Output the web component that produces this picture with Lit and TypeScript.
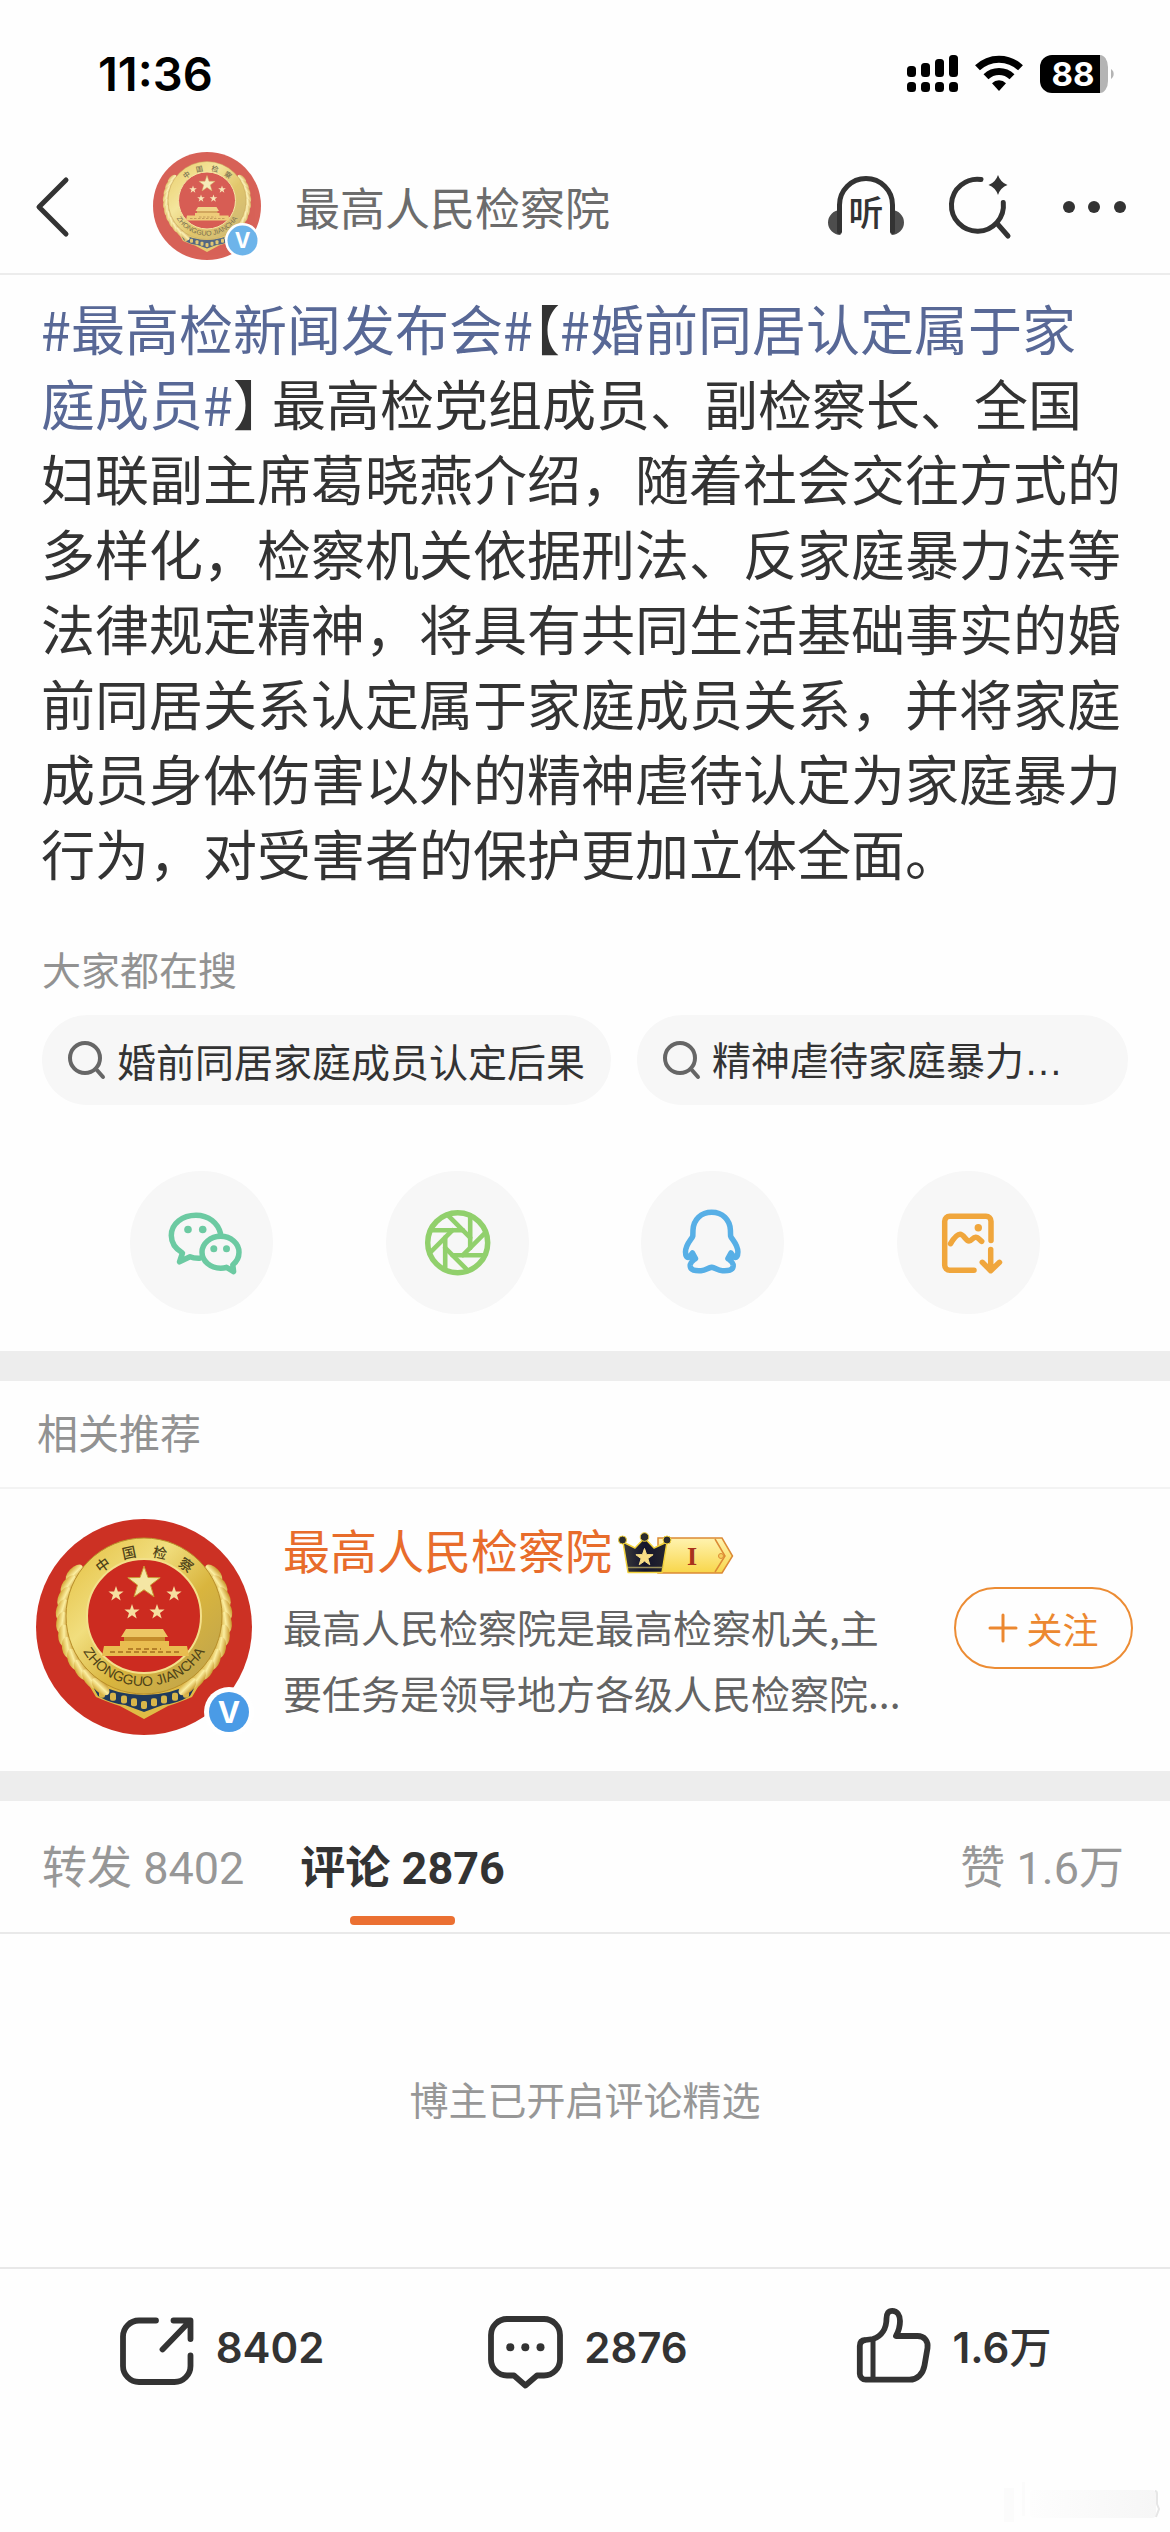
import { LitElement, html, svg, css } from "lit";
import { customElement, property, state } from "lit/decorators.js";
import { classMap } from "lit/directives/class-map.js";

const star = (cx: number, cy: number, r: number) => {
  const pts: string[] = [];
  for (let i = 0; i < 10; i++) {
    const rad = i % 2 ? r * 0.4 : r;
    const a = (-90 + i * 36) * (Math.PI / 180);
    pts.push(`${(cx + rad * Math.cos(a)).toFixed(1)},${(cy + rad * Math.sin(a)).toFixed(1)}`);
  }
  return pts.join(" ");
};

/* Wheat ears running down both flanks of the emblem ring. */
const leaves = Array.from({ length: 11 }, (_, i) => {
  const deg = 212 - i * 9;
  const a = (deg * Math.PI) / 180;
  return { x: 108 + 82 * Math.cos(a), y: 98 + 82 * Math.sin(a), rot: deg - 90 + 22 };
});

@customElement("org-avatar")
export class OrgAvatar extends LitElement {
  static styles = css`
    :host { display: block; flex: none; }
    .art { display: block; width: 100%; height: auto; }
    .cn { font: 500 14px "Noto Sans CJK SC", sans-serif; fill: #4f4318; text-anchor: middle; }
    .py { font: 14px "Liberation Sans", sans-serif; fill: #4f4318; text-anchor: middle; }
    .v { font: 700 30px Inter, sans-serif; fill: #fff; text-anchor: middle; }
    .v-large { font-size: 42px; }
    .faded { opacity: 0.76; }
  `;
  @property({ type: Boolean }) faded = false;
  @property({ type: Number }) badge = 20;

  render() {
    const b = this.badge;
    const bx = this.faded ? 179 : 193;
    const by = this.faded ? 177 : 193;
    return html`<svg class="art" viewBox="0 0 218 218" role="img" aria-label="最高人民检察院头像">
      <defs>
        <linearGradient id="gold" x1="0" y1="0" x2="1" y2="1">
          <stop offset="0" stop-color="#e3bd3c" />
          <stop offset="0.35" stop-color="#f1de7e" />
          <stop offset="0.6" stop-color="#d9b53e" />
          <stop offset="1" stop-color="#b9a050" />
        </linearGradient>
        <linearGradient id="leaf" x1="0" y1="0" x2="1" y2="0">
          <stop offset="0" stop-color="#c8962a" />
          <stop offset="0.5" stop-color="#fbeea0" />
          <stop offset="1" stop-color="#d3a836" />
        </linearGradient>
        <path id="arc" d="M38 108A71 71 0 0 0 178 108" />
      </defs>
      <g class=${classMap({ faded: this.faded })}>
        <circle cx="108" cy="108" r="108" fill="#cc3124" />
        <path d="M48 158L60 178Q74 184 84 187L108 200L132 187Q142 184 156 178L168 158Z" fill="#e0bb45" />
        <path d="M54 162Q108 190 162 162L154 177Q140 185 127 186L108 193L89 186Q76 185 62 177Z" fill="#1f3a5c" />
        ${[66, 77, 88, 98, 108, 118, 128, 139, 150].map(
          (x) => svg`<rect x=${x - 3} y=${182 - Math.abs(x - 108) * 0.27} width="6" height="8" rx="2" fill="#d8b64a" />`
        )}
        ${leaves.map(
          (l) => svg`<ellipse cx=${l.x} cy=${l.y} rx="6" ry="11" fill="url(#leaf)" transform="rotate(${l.rot + 80} ${l.x} ${l.y})" />
            <ellipse cx=${216 - l.x} cy=${l.y} rx="6" ry="11" fill="url(#leaf)" transform="rotate(${-l.rot - 80} ${216 - l.x} ${l.y})" />`
        )}
        <circle cx="108" cy="97" r="78" fill="url(#gold)" stroke="#b98f2a" stroke-width="1" />
        <circle cx="108" cy="97" r="57" fill="#cc2b20" stroke="#f3e08a" stroke-width="2" />
        <polygon points=${star(108, 64, 17)} fill="#f4e6a4" stroke="#c99a34" stroke-width="1" />
        <polygon points=${star(80, 75, 8)} fill="#f6dfa0" />
        <polygon points=${star(138, 75, 8)} fill="#f6dfa0" />
        <polygon points=${star(96, 93, 8)} fill="#f6dfa0" />
        <polygon points=${star(121, 93, 8)} fill="#f6dfa0" />
        <path d="M90 110H127L132 118H85Z" fill="#edc765" />
        <rect x="88" y="118" width="41" height="4" fill="#c58d2c" />
        <path d="M84 122H133V127H151L153 137H66L68 127H84Z" fill="#e9bd50" />
        <path d="M74 133H143M92 130H125" stroke="#b5802a" stroke-width="2" stroke-dasharray="5 3" />
        <text class="cn" x="67" y="51" transform="rotate(-36 67 46)">中</text>
        <text class="cn" x="93" y="39" transform="rotate(-12 93 34)">国</text>
        <text class="cn" x="124" y="39" transform="rotate(12 124 34)">检</text>
        <text class="cn" x="150" y="51" transform="rotate(36 150 46)">察</text>
        <text class="py"><textPath href="#arc" startOffset="50%">ZHONGGUO JIANCHA</textPath></text>
      </g>
      <circle cx=${bx} cy=${by} r=${b + 5} fill="#fff" />
      <circle cx=${bx} cy=${by} r=${b} fill=${this.faded ? "#6db4ea" : "#4a9be6"} />
      <text class=${classMap({ v: true, "v-large": this.faded })} x=${bx} y=${by + (this.faded ? 15 : 11)}>V</text>
    </svg>`;
  }
}

const searchIcon = svg`<circle cx="17" cy="17" r="15" /><path d="M28 28L35 36" />`;

const shareIcons = [
  {
    name: "微信",
    color: "#6ccaa2",
    art: svg`<path d="M69.5 87.3C66 87.4 62.5 87 60 85.8L49.5 90.8L52.5 82C45 77.5 41.3 71 41.3 64.5C41.3 52.5 52.5 44.2 66 44.2C78.5 44.2 88 52 90.5 62.5" />
      <path d="M96.5 96.3L103.6 100.6L102.8 93.8C107 90.5 109 86 109 81.3C109 72.5 101 65.3 90.7 65.3C80.4 65.3 72 72.5 72 81.3C72 90 80.4 97.2 90.7 97.2C92.8 97.2 94.7 96.9 96.5 96.3Z" />
      <g fill="currentColor" stroke="none"><circle cx="58" cy="58.5" r="3.8" /><circle cx="72.7" cy="58.5" r="3.8" /><circle cx="83.8" cy="77.8" r="3.5" /><circle cx="96.5" cy="77.8" r="3.5" /></g>`,
  },
  {
    name: "朋友圈",
    color: "#91d06c",
    art: svg`<circle cx="71.7" cy="71.7" r="30" />
      ${[0, 45, 90, 135, 180, 225, 270, 315].map(
        (a) => svg`<path stroke-width="4.6" d="M12.5 5.2V-27.3" transform="translate(71.7 71.7) rotate(${a})" />`
      )}`,
  },
  {
    name: "QQ",
    color: "#57afe6",
    art: svg`<path d="M70.7 41.3C60 41.3 52.5 48.5 52 59L51.8 65C51 68 44.5 73 44.5 81C44.5 85 46 87.5 48.5 86L51.5 82L54.5 87.5C52 89.5 49 91 49.2 95C49.5 99 55 100 60 99.7C65 99.4 67 96.8 70.7 96.3C74.4 96.8 76.4 99.4 81.4 99.7C86.4 100 91.9 99 92.2 95C92.4 91 89.4 89.5 86.9 87.5L89.9 82L92.9 86C95.4 87.5 96.9 85 96.9 81C96.9 73 90.4 68 89.6 65L89.4 59C88.9 48.5 81.4 41.3 70.7 41.3Z" />
      <path fill="currentColor" stroke-width="3" d="M51.500 82L54.500 87.500L49.500 87ZM89.900 82L86.900 87.500L91.900 87Z" />`,
  },
  {
    name: "保存图片",
    color: "#f0a63c",
    art: svg`<path d="M94 69.5V50.3a5 5 0 0 0-5-5H52.7a5 5 0 0 0-5 5V94.3a5 5 0 0 0 5 5H77" />
      <path d="M53.5 72.7C57 67 60 63.3 63 63.3C67 63.3 68.5 70 72 70C75 70 75.5 66.3 78.7 66.3C81 66.3 82.5 68.5 84.7 70.4" />
      <circle cx="81.3" cy="56.7" r="3.7" fill="currentColor" stroke="none" />
      <path d="M93.7 78.5V99.5M85.3 91.3L93.7 99.7L102.5 91.3" />`,
  },
];

const actions = [
  {
    name: "转发",
    count: "8402",
    unit: "",
    art: svg`<path d="M36 12.5H19a16 16 0 0 0-16 16V58a16 16 0 0 0 16 16H54.5a16 16 0 0 0 16-16V47.5M53.5 12.5H70.5V31M42.5 41.5L70 13" />`,
  },
  {
    name: "评论",
    count: "2876",
    unit: "",
    art: svg`<path d="M19 11H56a16 16 0 0 1 16 16V51.500a16 16 0 0 1-16 16H49L37.400 77.500L26 67.500H19a16 16 0 0 1-16-16V27a16 16 0 0 1 16-16Z" />
      <g fill="currentColor" stroke="none"><circle cx="22.3" cy="39.3" r="4" /><circle cx="37.3" cy="39.3" r="4" /><circle cx="52.5" cy="39.3" r="4" /></g>`,
  },
  {
    name: "赞",
    count: "1.6",
    unit: "万",
    art: svg`<path d="M16 31C25 28 29.500 20 29.500 10.500C29.500 5.500 31.500 2.800 35.200 2.800C40 2.800 43 7 43 13C43 19 41.500 23.500 39 28H60.500C67.500 28 71.500 33.500 70.500 40L67.500 57.500C66 66 60 71.700 52.500 71.700H9A6 6 0 0 1 2.800 65.700V38C2.800 34 5 32.300 8.500 32Z" /><path stroke-width="5" d="M16 32V71" />`,
  },
];

@customElement("app-root")
export class AppRoot extends LitElement {
  static styles = css`
    :host {
      display: flex;
      flex-direction: column;
      min-height: 100vh;
      background: #fefefe;
      color: #333;
      font-family: "Noto Sans CJK SC", sans-serif;
      font-size: 39px;
    }
    button {
      font: inherit;
      color: inherit;
      background: none;
      border: 0;
      padding: 0;
      cursor: pointer;
    }
    a { color: inherit; text-decoration: none; }
    svg { display: block; flex: none; overflow: visible; }
    .line { fill: none; stroke: currentColor; stroke-linecap: round; stroke-linejoin: round; }

    .status {
      display: flex;
      align-items: center;
      justify-content: space-between;
      height: 140px;
      padding: 8px 54px 0 98px;
      box-sizing: border-box;
      color: #000;
    }
    .clock { font: 600 47px/56px Inter, sans-serif; }
    .status-icons { display: flex; gap: 17px; }
    .pct { font: 700 33px Inter, sans-serif; fill: #fff; text-anchor: middle; }

    .top {
      display: flex;
      align-items: center;
      height: 133px;
      padding: 0 43px 0 36px;
      border-bottom: 2px solid #ececec;
    }
    .who { display: flex; align-items: center; gap: 33px; margin-left: 84px; flex: 1; }
    .who-pic { width: 109px; }
    .who-name { font-size: 45px; line-height: 60px; color: #6c6c6c; font-weight: 400; margin: 0; }
    .tools { display: flex; align-items: center; gap: 43px; }
    .ting { font: 500 35px "Noto Sans CJK SC", sans-serif; fill: currentColor; text-anchor: middle; }

    .post { padding: 15px 45px 0 41px; font-size: 54px; line-height: 75px; margin: 0; }
    .topic { color: #586896; }
    .half { font-feature-settings: "halt"; }

    .label { margin: 0; font-weight: 400; color: #929292; }
    .hot { padding: 50px 42px 0; }
    .hot .label { font-size: 39px; line-height: 56px; }
    .pills { display: flex; gap: 26px; margin-top: 19px; }
    .pill {
      display: flex;
      align-items: center;
      gap: 12px;
      height: 90px;
      padding: 0 26px;
      border-radius: 45px;
      background: #f7f7f7;
      line-height: 56px;
      white-space: nowrap;
    }
    .pill:last-child { flex: 1; }
    .pill svg { color: #666; }
    .dots { font-family: "Liberation Sans", sans-serif; }

    .share { display: grid; grid-template-columns: repeat(4, 1fr); justify-items: center; padding: 66px 74px 37px; }
    .round { width: 143px; height: 143px; border-radius: 50%; background: #f7f7f7; }

    .band { height: 30px; background: #ededed; flex: none; }

    .rec-title { font-size: 41px; line-height: 60px; padding: 20px 37px 26px; border-bottom: 2px solid #f3f3f3; }
    .card { display: flex; padding: 30px 37px 34px 36px; }
    .card-pic { width: 218px; }
    .info { flex: 1; min-width: 0; margin-left: 29px; }
    .info-head { display: flex; align-items: center; gap: 6px; }
    .info-head svg { margin-top: 8px; }
    .info-name { font-size: 47px; line-height: 60px; font-weight: 400; margin: 0; color: #e86c2b; }
    .desc { margin: 14px 0 0; font-size: 39px; line-height: 66px; color: #636363; max-width: 630px; }
    .rank { font: 700 26px "Liberation Serif", serif; fill: #a8321c; text-anchor: middle; }
    .follow {
      align-self: center;
      display: flex;
      align-items: center;
      justify-content: center;
      gap: 8px;
      width: 179px;
      height: 82px;
      border: 2px solid #ec8c34;
      border-radius: 41px;
      color: #ec8830;
      font-size: 36px;
      line-height: 50px;
    }

    .tabs {
      display: flex;
      gap: 56px;
      padding: 38px 46px 0 42px;
      border-bottom: 2px solid #e9e9e9;
    }
    .tab {
      display: flex;
      flex-direction: column;
      align-items: center;
      gap: 17px;
      padding-bottom: 7px;
      font-family: Roboto, "Noto Sans CJK SC", sans-serif;
      font-size: 45px;
      line-height: 60px;
      color: #979797;
    }
    .tab:last-child { margin-left: auto; }
    .tab::after { content: ""; width: 105px; height: 9px; border-radius: 4px; }
    .tab.on { color: #333; font-weight: 700; }
    .tab.on::after { background: #eb7032; }

    .empty {
      flex: 1;
      min-height: 200px;
      display: flex;
      align-items: center;
      justify-content: center;
      padding-bottom: 6px;
      color: #979797;
      line-height: 56px;
    }
    .empty p { margin: 0; }

    .bar {
      display: grid;
      grid-template-columns: repeat(3, 1fr);
      padding: 39px 33px 0 39px;
      border-top: 2px solid #e8e8e8;
    }
    .act {
      display: flex;
      align-items: center;
      justify-content: center;
      gap: 21px;
      font: 600 42px/56px Inter, "Noto Sans CJK SC", sans-serif;
    }
    .unit { font-weight: 500; }
    .mark { align-self: flex-end; margin: 94px 10px 10px 0; }
  `;

  @state() private tab = "评论";

  private tabs = [
    { name: "转发", count: "8402" },
    { name: "评论", count: "2876" },
    { name: "赞", count: "1.6万" },
  ];

  render() {
    return html`
      <div class="status">
        <span class="clock">11:36</span>
        <div class="status-icons">
          <svg width="51" height="38" viewBox="0 0 51 38" aria-hidden="true">
            ${[11, 8, 4, 0].map(
              (y, i) => svg`<rect x=${i * 14} y=${y} width="9" height=${22 - y} rx="3.5" /><rect x=${i * 14} y="27" width="9" height="10" rx="3.5" />`
            )}
          </svg>
          <svg width="48" height="38" viewBox="0 0 48 38" aria-hidden="true">
            <g fill="none" stroke="currentColor" stroke-width="7">
              <path d="M2.500 12.800A31 31 0 0 1 45.500 12.800" />
              <path d="M11 21.800A18.500 18.500 0 0 1 37 21.800" />
            </g>
            <path d="M17 28.200A10 10 0 0 1 31 28.200L24 36Z" />
          </svg>
          <svg width="76" height="38" viewBox="0 0 76 38" role="img" aria-label="电量 88%">
            <path d="M60 0H56V38H60A8 12 0 0 0 68 26V12A8 12 0 0 0 60 0Z" fill="#b4b4b4" />
            <path d="M12 0H60V38H12A12 12 0 0 1 0 26V12A12 12 0 0 1 12 0Z" />
            <path d="M71 14a6 6 0 0 1 0 10Z" fill="#b4b4b4" />
            <text class="pct" x="33" y="31">88</text>
          </svg>
        </div>
      </div>

      <header class="top">
        <button aria-label="返回">
          <svg class="line" width="33" height="60" viewBox="0 0 33 60" stroke-width="5"><path d="M30 3L3 30L30 57" /></svg>
        </button>
        <a class="who" href="#profile">
          <org-avatar class="who-pic" faded badge="30"></org-avatar>
          <h1 class="who-name">最高人民检察院</h1>
        </a>
        <div class="tools">
          <button aria-label="听">
            <svg width="80" height="64" viewBox="0 0 80 64">
              <path d="M14.500 35A12.500 12.500 0 0 0 14.500 60ZM65.500 35A12.500 12.500 0 0 1 65.500 60Z" fill="#4d4d4d" />
              <path class="line" stroke-width="5" d="M13.500 56.500V30A26.500 26.500 0 0 1 66.500 30V56.500" />
              <text class="ting" x="40" y="51">听</text>
            </svg>
          </button>
          <button aria-label="搜索">
            <svg width="63" height="66" viewBox="0 0 63 66">
              <path class="line" stroke-width="5" d="M32 5.500A26 26 0 1 0 54.300 28.500M48.500 50L59 62" />
              <path fill="currentColor" d="M49 1Q51.500 8.500 58.500 11Q51.500 13.500 49 21Q46.500 13.500 39.500 11Q46.500 8.500 49 1Z" />
            </svg>
          </button>
          <button aria-label="更多">
            <svg width="72" height="20" viewBox="0 0 72 20" fill="currentColor"><circle cx="14" cy="10" r="6" /><circle cx="39" cy="10" r="6" /><circle cx="65" cy="10" r="6" /></svg>
          </button>
        </div>
      </header>

      <p class="post"><a class="topic" href="#t1">#最高检新闻发布会#</a><span class="half">【</span><a class="topic" href="#t2">#婚前同居认定属于家庭成员#</a><span class="half">】</span> 最高检党组成员、副检察长、全国妇联副主席葛晓燕介绍，随着社会交往方式的多样化，检察机关依据刑法、反家庭暴力法等法律规定精神，将具有共同生活基础事实的婚前同居关系认定属于家庭成员关系，并将家庭成员身体伤害以外的精神虐待认定为家庭暴力行为，对受害者的保护更加立体全面。</p>

      <section class="hot">
        <h2 class="label">大家都在搜</h2>
        <div class="pills">
          <a class="pill" href="#s1">
            <svg class="line" width="37" height="38" viewBox="0 0 37 38" stroke-width="4">${searchIcon}</svg>
            <span>婚前同居家庭成员认定后果</span>
          </a>
          <a class="pill" href="#s2">
            <svg class="line" width="37" height="38" viewBox="0 0 37 38" stroke-width="4">${searchIcon}</svg>
            <span>精神虐待家庭暴力<span class="dots">…</span></span>
          </a>
        </div>
      </section>

      <div class="share">
        ${shareIcons.map(
          (s) => html`<button class="round" aria-label=${s.name}>
            <svg class="line" width="143" height="143" viewBox="0 0 143 143" stroke-width="5.500" color=${s.color}>${s.art}</svg>
          </button>`
        )}
      </div>

      <div class="band"></div>
      <section>
        <h2 class="label rec-title">相关推荐</h2>
        <div class="card">
          <org-avatar class="card-pic"></org-avatar>
          <div class="info">
            <div class="info-head">
              <h3 class="info-name">最高人民检察院</h3>
              <svg width="116" height="42" viewBox="0 0 116 42">
                <defs>
                  <linearGradient id="tag" x1="0" y1="0" x2="0" y2="1"><stop offset="0" stop-color="#fff3b0" /><stop offset="1" stop-color="#f8d64a" /></linearGradient>
                  <linearGradient id="crown" x1="0" y1="0" x2="1" y2="0"><stop offset="0" stop-color="#3a3a3a" /><stop offset="0.500" stop-color="#14142c" /><stop offset="1" stop-color="#26262e" /></linearGradient>
                </defs>
                <path d="M40 6H104L114.500 24L104 41H40Z" fill="url(#tag)" stroke="#dc8a35" stroke-width="1.500" />
                <path d="M97 7L107 24L97 40" fill="none" stroke="#dc8a35" stroke-width="1.500" />
                <circle cx="103" cy="24" r="2.500" fill="#f6cf60" stroke="#dc8a35" />
                <path d="M5 10L17 16L26.500 6L36 16L49 10L44 40.500H10Z" fill="url(#crown)" stroke="#f2d23c" stroke-width="1.500" stroke-linejoin="round" />
                <path d="M10 35.500H44.500" stroke="#9a8f5a" stroke-width="1.500" />
                <g fill="#2c2c2c" stroke="#f2d23c" stroke-width="1"><circle cx="4.500" cy="8" r="4" /><circle cx="26.500" cy="5" r="4.300" /><circle cx="49" cy="8" r="4" /></g>
                <polygon points=${star(26.5, 25.5, 9)} fill="#f7dc86" stroke="#f7dc86" stroke-linejoin="round" />
                <text class="rank" x="74" y="33">I</text>
              </svg>
            </div>
            <p class="desc">最高人民检察院是最高检察机关,主要任务是领导地方各级人民检察院...</p>
          </div>
          <button class="follow">
            <svg class="line" width="30" height="30" viewBox="0 0 30 30" stroke-width="3"><path d="M2 15H28M15 2V28" /></svg>
            <span>关注</span>
          </button>
        </div>
      </section>
      <div class="band"></div>

      <nav class="tabs">
        ${this.tabs.map(
          (t) => html`<button class=${classMap({ tab: true, on: t.name === this.tab })} @click=${() => (this.tab = t.name)}>${t.name} ${t.count}</button>`
        )}
      </nav>
      <div class="empty"><p>博主已开启评论精选</p></div>

      <footer class="bar">
        ${actions.map(
          (a) => html`<button class="act" aria-label="${a.name} ${a.count}${a.unit}">
            <svg class="line" width="75" height="80" viewBox="0 0 75 80" stroke-width="5.800">${a.art}</svg>
            <span>${a.count}<span class="unit">${a.unit}</span></span>
          </button>`
        )}
      </footer>
      <svg class="mark" width="164" height="40" viewBox="0 0 164 40" aria-hidden="true">
        <defs>
          <linearGradient id="fade" x1="0" y1="0" x2="1" y2="0"><stop offset="0" stop-color="#fdfdfd" /><stop offset="1" stop-color="#f6f6f6" /></linearGradient>
        </defs>
        <rect x="8" y="6" width="10" height="34" fill="#fbfbfb" />
        <rect x="26" y="0" width="3" height="34" fill="#fbfbfb" />
        <rect x="34" y="8" width="126" height="28" rx="4" fill="url(#fade)" />
        <path d="M159 9Q161 9 161 12V22L163 27L160 35" fill="none" stroke="#e6e6e6" stroke-width="2" />
      </svg>
    `;
  }
}
